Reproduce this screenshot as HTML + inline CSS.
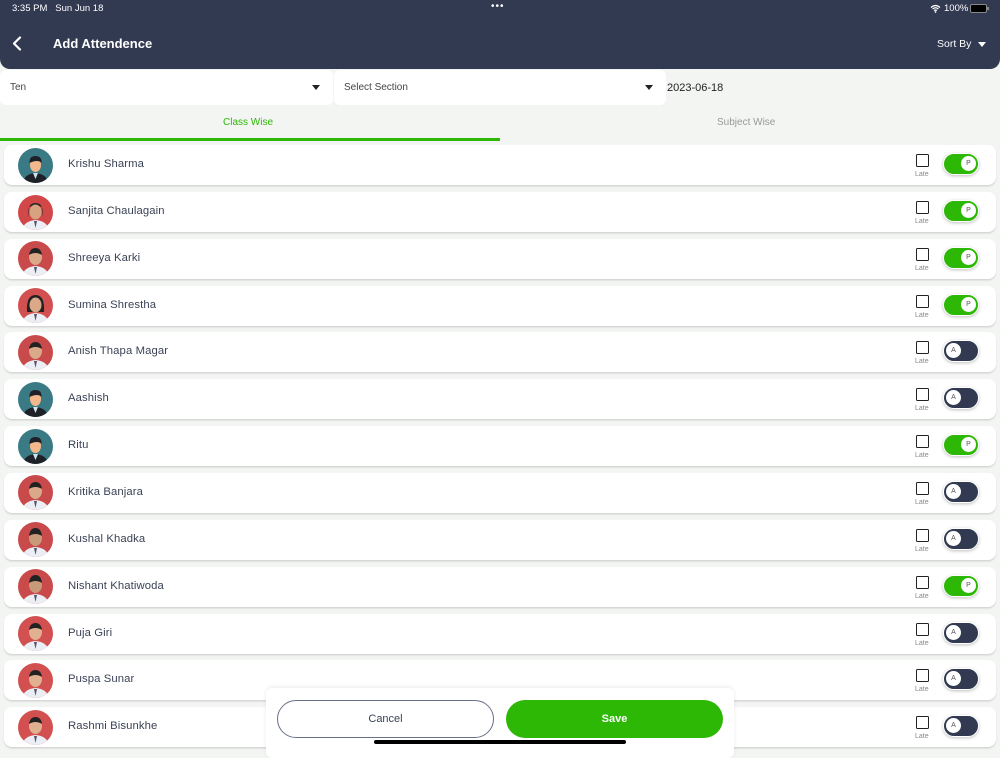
<!DOCTYPE html>
<html><head><meta charset="utf-8"><style>
*{box-sizing:border-box;margin:0;padding:0}
body{width:1000px;height:750px;overflow:hidden;background:#f3f5f3;font-family:"Liberation Sans",sans-serif;position:relative}
.hdr{position:absolute;left:0;top:0;width:1000px;height:69px;background:#323a52;border-radius:0 0 10px 10px;color:#fff}
.abs{position:absolute}
.dd{position:absolute;top:70px;height:35px;background:#fff;border-radius:6px;font-size:10px;color:#444;padding:12px 10px}
.tri{position:absolute;width:0;height:0;border-left:4px solid transparent;border-right:4px solid transparent;border-top:5px solid #222}
.row{position:absolute;left:4px;width:992px;height:40px;background:#fff;border-radius:8px;box-shadow:0 1.5px 1.5px rgba(0,0,0,.13)}
.av{position:absolute;left:14px;top:2.5px;width:35px;height:35px;border-radius:50%;overflow:hidden}
.nm{position:absolute;left:64px;top:13px;font-size:11.3px;color:#3a4255;letter-spacing:.1px}
.cb{position:absolute;left:912px;top:9px;width:13px;height:13px;border:1.6px solid #222;border-radius:1.5px}
.late{position:absolute;left:911px;top:26px;font-size:7px;color:#888}
.tg{position:absolute;left:939px;top:8px;width:36px;height:22px;border-radius:11px;border:1.5px solid #fff;box-shadow:0 1px 3px rgba(0,0,0,.25)}
.tg.p{background:#2db806}.tg.a{background:#323a52}
.kn{position:absolute;top:2px;width:15px;height:15px;border-radius:50%;background:#fff;font-size:7px;color:#555;text-align:center;line-height:15px}
.p .kn{right:2px}.a .kn{left:2px}
</style></head><body>
<div class="hdr">
<div class="abs" style="left:12px;top:3px;font-size:9.5px">3:35 PM&nbsp;&nbsp;&nbsp;Sun Jun 18</div>
<div class="abs" style="left:491px;top:1px;font-size:10px;letter-spacing:1px">•••</div>
<div class="abs" style="left:944px;top:3px;font-size:9.5px">100%</div>
<svg class="abs" style="left:930px;top:4px" width="11" height="9" viewBox="0 0 11 9"><path d="M1 3.5Q5.5 -0.5 10 3.5M2.6 5Q5.5 2.5 8.4 5M4.2 6.6Q5.5 5.5 6.8 6.6" stroke="#fff" stroke-width="1.3" fill="none"/><circle cx="5.5" cy="8" r="0.9" fill="#fff"/></svg>
<div class="abs" style="left:970px;top:4px;width:17px;height:9px;background:#000;border:1px solid #888;border-radius:2px"></div>
<div class="abs" style="left:987px;top:7px;width:1.5px;height:3px;background:#888"></div>
<svg class="abs" style="left:11px;top:36px" width="12" height="15" viewBox="0 0 12 15"><path d="M9 1.5L3 7.5L9 13.5" stroke="#fff" stroke-width="2.2" fill="none" stroke-linecap="round" stroke-linejoin="round"/></svg>
<div class="abs" style="left:53px;top:36px;font-size:13px;font-weight:bold">Add Attendence</div>
<div class="abs" style="left:937px;top:38px;font-size:10.5px">Sort By</div>
<div class="tri" style="left:978px;top:42px;border-top-color:#fff"></div>
</div>
<div class="dd" style="left:0;width:333px">Ten<div class="tri" style="left:312px;top:15px"></div></div>
<div class="dd" style="left:334px;width:332px">Select Section<div class="tri" style="left:311px;top:15px"></div></div>
<div class="abs" style="left:667px;top:82px;font-size:11px;color:#222">2023-06-18</div>
<div class="abs" style="left:223px;top:117px;font-size:10px;color:#2db806">Class Wise</div>
<div class="abs" style="left:717px;top:117px;font-size:10px;color:#999">Subject Wise</div>
<div class="abs" style="left:0;top:138px;width:500px;height:3px;background:#2db806"></div>

<div class="row" style="top:145px"><div class="av"><svg width="35" height="35"><rect width="35" height="35" fill="#3a7a84"/><path d="M5 35Q6 26 17.5 25Q29 26 30 35Z" fill="#1e2228"/><path d="M15 25L17.5 31L20 25Z" fill="#cfe3f2"/><ellipse cx="17.5" cy="17" rx="5.5" ry="7" fill="#f3b98c"/><path d="M11.5 15Q11 8 17.5 8Q24 8 23.5 15Q20 11 11.5 15Z" fill="#1e2228"/></svg></div><div class="nm">Krishu Sharma</div><div class="cb"></div><div class="late">Late</div><div class="tg p"><div class="kn">P</div></div></div>
<div class="row" style="top:192px"><div class="av"><svg width="35" height="35"><rect width="35" height="35" fill="#d24848"/><path d="M4 35Q6 26 17.5 25Q29 26 31 35Z" fill="#eceef6"/><path d="M10 22Q9 8 17.5 8Q26 8 25 22L24 12Q17.5 9 11 12Z" fill="#222"/><ellipse cx="17.5" cy="17" rx="6" ry="7.5" fill="#d6a280"/><path d="M16 26L17.5 33L19 26Z" fill="#556"/></svg></div><div class="nm">Sanjita Chaulagain</div><div class="cb"></div><div class="late">Late</div><div class="tg p"><div class="kn">P</div></div></div>
<div class="row" style="top:238.7px"><div class="av"><svg width="35" height="35"><rect width="35" height="35" fill="#c94a4a"/><path d="M4 35Q6 26 17.5 25Q29 26 31 35Z" fill="#eceef6"/><ellipse cx="17.5" cy="16" rx="6.5" ry="8" fill="#d9a98a"/><path d="M11 14Q12 7 17.5 7Q23 7 24 14Q17.5 10 11 14Z" fill="#222"/><path d="M16 26L17.5 33L19 26Z" fill="#556"/></svg></div><div class="nm">Shreeya Karki</div><div class="cb"></div><div class="late">Late</div><div class="tg p"><div class="kn">P</div></div></div>
<div class="row" style="top:285.5px"><div class="av"><svg width="35" height="35"><rect width="35" height="35" fill="#d25050"/><path d="M4 35Q6 26 17.5 25Q29 26 31 35Z" fill="#eceef6"/><path d="M9 24Q8 7 17.5 7Q27 7 26 24Z" fill="#222"/><ellipse cx="17.5" cy="17" rx="6" ry="7.5" fill="#d9a98a"/><path d="M16 26L17.5 33L19 26Z" fill="#556"/></svg></div><div class="nm">Sumina Shrestha</div><div class="cb"></div><div class="late">Late</div><div class="tg p"><div class="kn">P</div></div></div>
<div class="row" style="top:332.4px"><div class="av"><svg width="35" height="35"><rect width="35" height="35" fill="#c94a4a"/><path d="M4 35Q6 26 17.5 25Q29 26 31 35Z" fill="#eceef6"/><ellipse cx="17.5" cy="16" rx="6.5" ry="8" fill="#d9a98a"/><path d="M11 14Q12 7 17.5 7Q23 7 24 14Q17.5 10 11 14Z" fill="#222"/><path d="M16 26L17.5 33L19 26Z" fill="#556"/></svg></div><div class="nm">Anish Thapa Magar</div><div class="cb"></div><div class="late">Late</div><div class="tg a"><div class="kn">A</div></div></div>
<div class="row" style="top:379.2px"><div class="av"><svg width="35" height="35"><rect width="35" height="35" fill="#3a7a84"/><path d="M5 35Q6 26 17.5 25Q29 26 30 35Z" fill="#1e2228"/><path d="M15 25L17.5 31L20 25Z" fill="#cfe3f2"/><ellipse cx="17.5" cy="17" rx="5.5" ry="7" fill="#f3b98c"/><path d="M11.5 15Q11 8 17.5 8Q24 8 23.5 15Q20 11 11.5 15Z" fill="#1e2228"/></svg></div><div class="nm">Aashish</div><div class="cb"></div><div class="late">Late</div><div class="tg a"><div class="kn">A</div></div></div>
<div class="row" style="top:426px"><div class="av"><svg width="35" height="35"><rect width="35" height="35" fill="#3a7a84"/><path d="M5 35Q6 26 17.5 25Q29 26 30 35Z" fill="#1e2228"/><path d="M15 25L17.5 31L20 25Z" fill="#cfe3f2"/><ellipse cx="17.5" cy="17" rx="5.5" ry="7" fill="#f3b98c"/><path d="M11.5 15Q11 8 17.5 8Q24 8 23.5 15Q20 11 11.5 15Z" fill="#1e2228"/></svg></div><div class="nm">Ritu</div><div class="cb"></div><div class="late">Late</div><div class="tg p"><div class="kn">P</div></div></div>
<div class="row" style="top:472.9px"><div class="av"><svg width="35" height="35"><rect width="35" height="35" fill="#c94a4a"/><path d="M4 35Q6 26 17.5 25Q29 26 31 35Z" fill="#eceef6"/><ellipse cx="17.5" cy="16" rx="6.5" ry="8" fill="#d9a98a"/><path d="M11 14Q12 7 17.5 7Q23 7 24 14Q17.5 10 11 14Z" fill="#222"/><path d="M16 26L17.5 33L19 26Z" fill="#556"/></svg></div><div class="nm">Kritika Banjara</div><div class="cb"></div><div class="late">Late</div><div class="tg a"><div class="kn">A</div></div></div>
<div class="row" style="top:519.8px"><div class="av"><svg width="35" height="35"><rect width="35" height="35" fill="#c94a4a"/><path d="M4 35Q6 26 17.5 25Q29 26 31 35Z" fill="#eceef6"/><ellipse cx="17.5" cy="16" rx="6.5" ry="8" fill="#c99a7a"/><path d="M11 14Q12 6 17.5 6Q23 6 24 14Q17.5 10 11 14Z" fill="#222"/><path d="M16 26L17.5 33L19 26Z" fill="#556"/></svg></div><div class="nm">Kushal Khadka</div><div class="cb"></div><div class="late">Late</div><div class="tg a"><div class="kn">A</div></div></div>
<div class="row" style="top:566.6px"><div class="av"><svg width="35" height="35"><rect width="35" height="35" fill="#c94a4a"/><path d="M4 35Q6 26 17.5 25Q29 26 31 35Z" fill="#eceef6"/><ellipse cx="17.5" cy="16" rx="6.5" ry="8" fill="#c99a7a"/><path d="M11 14Q12 6 17.5 6Q23 6 24 14Q17.5 10 11 14Z" fill="#222"/><path d="M16 26L17.5 33L19 26Z" fill="#556"/></svg></div><div class="nm">Nishant Khatiwoda</div><div class="cb"></div><div class="late">Late</div><div class="tg p"><div class="kn">P</div></div></div>
<div class="row" style="top:613.5px"><div class="av"><svg width="35" height="35"><rect width="35" height="35" fill="#d25050"/><path d="M4 35Q6 26 17.5 25Q29 26 31 35Z" fill="#eceef6"/><ellipse cx="17.5" cy="16" rx="6.5" ry="8" fill="#e0b090"/><path d="M11 14Q12 7 17.5 7Q23 7 24 14Q17.5 10 11 14Z" fill="#222"/><path d="M16 26L17.5 33L19 26Z" fill="#556"/></svg></div><div class="nm">Puja Giri</div><div class="cb"></div><div class="late">Late</div><div class="tg a"><div class="kn">A</div></div></div>
<div class="row" style="top:660.3px"><div class="av"><svg width="35" height="35"><rect width="35" height="35" fill="#d25050"/><path d="M4 35Q6 26 17.5 25Q29 26 31 35Z" fill="#eceef6"/><ellipse cx="17.5" cy="16" rx="6.5" ry="8" fill="#e0b090"/><path d="M11 14Q12 7 17.5 7Q23 7 24 14Q17.5 10 11 14Z" fill="#222"/><path d="M16 26L17.5 33L19 26Z" fill="#556"/></svg></div><div class="nm">Puspa Sunar</div><div class="cb"></div><div class="late">Late</div><div class="tg a"><div class="kn">A</div></div></div>
<div class="row" style="top:707.2px"><div class="av"><svg width="35" height="35"><rect width="35" height="35" fill="#d25050"/><path d="M4 35Q6 26 17.5 25Q29 26 31 35Z" fill="#eceef6"/><ellipse cx="17.5" cy="16" rx="6.5" ry="8" fill="#e0b090"/><path d="M11 14Q12 7 17.5 7Q23 7 24 14Q17.5 10 11 14Z" fill="#222"/><path d="M16 26L17.5 33L19 26Z" fill="#556"/></svg></div><div class="nm">Rashmi Bisunkhe</div><div class="cb"></div><div class="late">Late</div><div class="tg a"><div class="kn">A</div></div></div>

<div class="abs" style="left:266px;top:688px;width:468px;height:70px;background:#fff;border-radius:6px;box-shadow:0 -1px 4px rgba(0,0,0,.08)"></div>
<div class="abs" style="left:277px;top:700px;width:217px;height:38px;border:1.2px solid #6a7188;border-radius:19px;text-align:center;line-height:36px;font-size:11px;color:#3a4255;background:#fff">Cancel</div>
<div class="abs" style="left:506px;top:700px;width:217px;height:38px;background:#2db806;border-radius:19px;text-align:center;line-height:38px;font-size:11px;font-weight:bold;color:#fff">Save</div>
<div class="abs" style="left:374px;top:740px;width:252px;height:4px;background:#000;border-radius:2px"></div>
</body></html>
